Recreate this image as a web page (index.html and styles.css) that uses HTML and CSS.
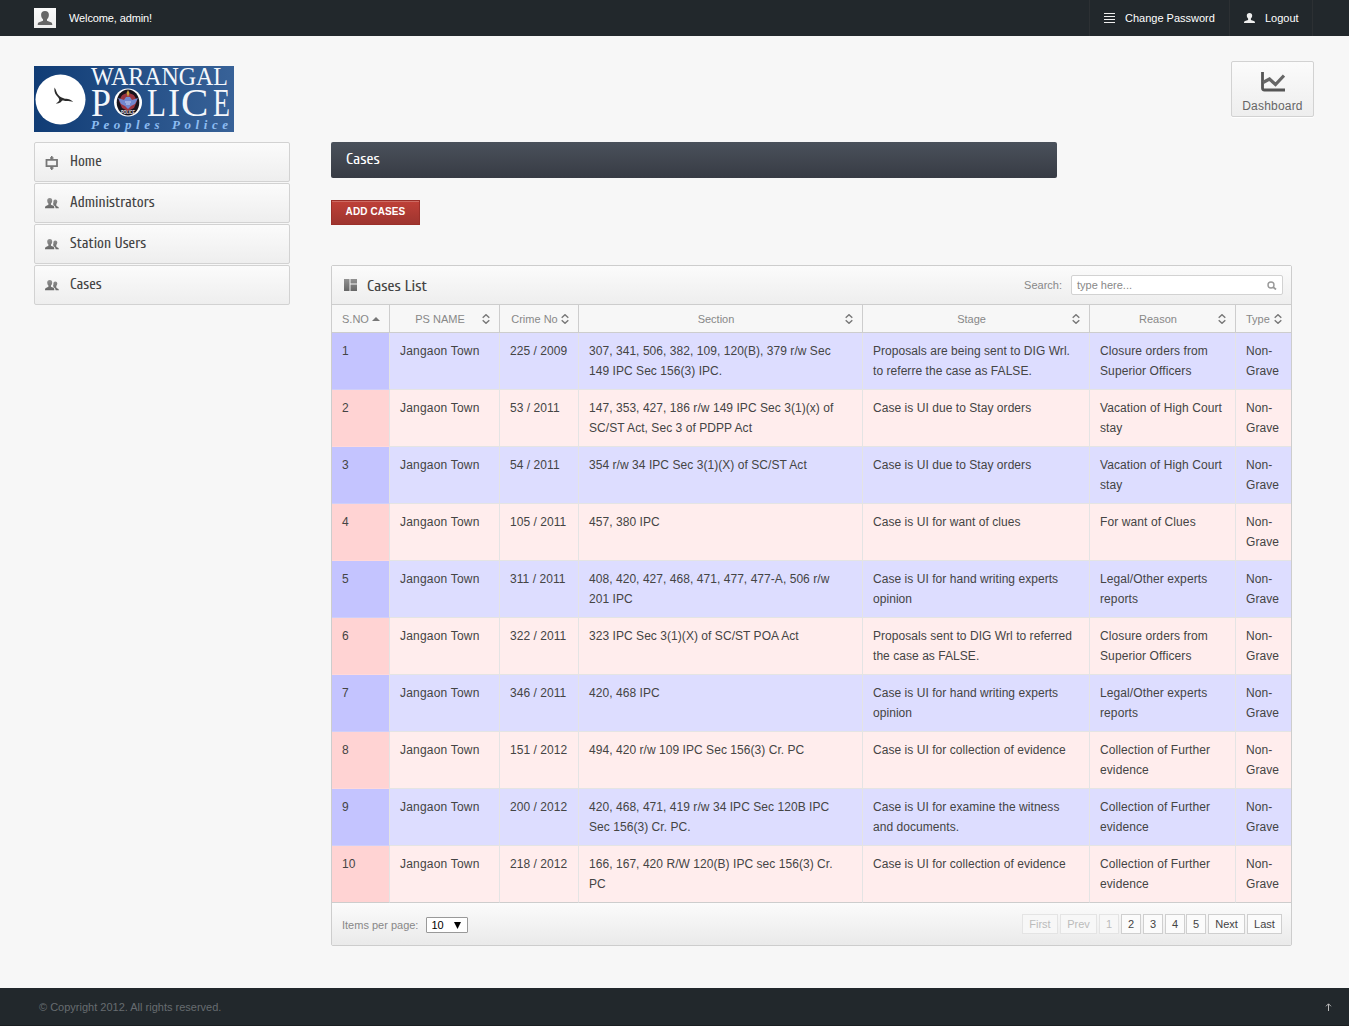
FILE: index.html
```html
<!DOCTYPE html>
<html lang="en">
<head>
<meta charset="utf-8">
<title>Cases</title>
<link rel="stylesheet" href="styles.css">
</head>
<body>
<svg class="defs" aria-hidden="true">
  <defs>
    <linearGradient id="gray" x1="0" y1="0" x2="0" y2="1"><stop offset="0" stop-color="#929292"/><stop offset="1" stop-color="#666"/></linearGradient>
    <linearGradient id="blue" x1="0" y1="0" x2="1" y2="0"><stop offset="0" stop-color="#103c75"/><stop offset="1" stop-color="#386298"/></linearGradient>
    <symbol id="users" viewBox="0 0 14 11"><path fill="url(#gray)" d="M4.8 0c1.8 0 2.5 1.2 2.4 2.8-.1 1.3-.6 2.2-1.2 2.7v1.3l2.4 1c.7.3.9.9.9 2.4H0c0-1.400.3-2 .9-2.300l2.500-1.100V5.500C2.700 5 2.300 4.100 2.200 2.800 2.100 1.200 3 0 4.800 0zM10.300 1.400c1.500 0 2.100 1.100 2 2.400-.1 1-.5 1.800-1 2.200v1.200c0 .5.400.800 1.200 1.200 1 .5 1.400.9 1.400 1.800h-3.300c-.1-1.300-.4-2-1.300-2.500l-.9-.5V6.600C8 6.100 8.100 5.200 8.400 4.400c-.2-1.700.4-3 1.900-3z"/></symbol>
    <symbol id="sort" viewBox="0 0 8 10"><path d="M.7 3.700 4 .7l3.300 3M.7 6.300 4 9.300l3.300-3" fill="none" stroke="#777" stroke-width="1.400"/></symbol>
  </defs>
</svg>

<header class="topbar">
  <div class="welcome">
    <span class="avatar"><svg width="16" height="16" viewBox="0 0 16 16"><path fill="#666" d="M8 1c2.600 0 3.900 1.600 3.900 3.800 0 1.900-.8 3.600-1.900 4.500v1.500l3.800 1.500c1 .4 1.400 1 1.500 2.700H.7c.1-1.700.5-2.300 1.500-2.700L6 10.800V9.300C4.900 8.400 4.100 6.700 4.100 4.800 4.100 2.600 5.400 1 8 1z"/></svg></span>
    <span class="hello">Welcome, admin!</span>
  </div>
  <nav class="usernav">
    <a class="change"><svg width="11" height="11" viewBox="0 0 11 11"><path d="M0 .5h11M0 3.500h11M0 6.500h11M0 9.500h11" stroke="#eee"/></svg><span>Change Password</span></a>
    <a class="logout"><svg width="11" height="11" viewBox="0 0 11 11"><path fill="#eee" d="M5.500 0c1.800 0 2.700 1.100 2.700 2.600 0 1.300-.6 2.400-1.300 3v1.300l3 1c.8.300 1.100.8 1.100 2.100H0C0 8.700.3 8.200 1.100 7.900l3-1V5.600c-.7-.6-1.300-1.700-1.300-3C2.800 1.100 3.700 0 5.500 0z"/></svg><span>Logout</span></a>
  </nav>
</header>

<div class="masthead">
  <svg class="logo" width="200" height="66" viewBox="0 0 200 66">
    <rect width="200" height="66" fill="url(#blue)"/>
    <circle cx="26.500" cy="33.500" r="25" fill="#fff"/>
    <path d="M20.500 21.500c1.200 1.500 1.500 3 2.200 4.800.8 2.200 2.300 3.800 4.400 4.900 1.800.9 3.100 1.500 5.300 1.600 2 0 4.600.900 6.900 3.300-2.400-1.100-4.300-1.100-6.700-1.200-1.800-.1-3-.4-4.100-.5-.8.200-1.100.9-1.800 1.900-1.200 1-2.900 1.200-4.900 1.300 1.600-1 3.200-2.300 3.500-3.600-.3-2.200-1.600-3-2.800-4.400-2-2.300-2.400-5-2-8.100z" fill="#2b2b2b"/>
    <text class="serif" x="57" y="18.500" font-size="25" textLength="137" lengthAdjust="spacingAndGlyphs">WARANGAL</text>
    <text class="serif" x="57" y="50" font-size="41" textLength="20" lengthAdjust="spacingAndGlyphs">P</text>
    <text class="serif" x="113" y="50" font-size="41" textLength="19" lengthAdjust="spacingAndGlyphs">L</text>
    <text class="serif" x="134" y="50" font-size="41" textLength="12" lengthAdjust="spacingAndGlyphs">I</text>
    <text class="serif" x="147" y="50" font-size="41">C</text>
    <text class="serif" x="179" y="50" font-size="41" textLength="17" lengthAdjust="spacingAndGlyphs">E</text>
    <ellipse cx="94" cy="36.500" rx="14" ry="14" fill="#fff"/>
    <ellipse cx="94" cy="36.500" rx="11.300" ry="13" fill="#18131c"/>
    <path d="M87 31c2-5 12-5 14 0l2 4-3 7-6 3-6-3-3-7z" fill="#9b3540"/>
    <path d="M84 32l6 2 2-3h4l2 3 6-2-3 6-4 2-3 3-3-3-4-2z" fill="#7187cf"/>
    <path d="M94 24l1.500 3L94 31l-1.500-4z" fill="#d0a13c"/>
    <path d="M91 36h6M92 38h4" stroke="#c9d3f2"/>
    <text x="87" y="48" font-size="5" font-weight="bold" fill="#e7e3e9" textLength="14" lengthAdjust="spacingAndGlyphs">POLICE</text>
    <text class="tag" x="57" y="63" font-size="13" textLength="137" lengthAdjust="spacing">Peoples Police</text>
  </svg>
  <a class="dashboard"><svg width="24" height="20" viewBox="0 0 24 20"><path d="M1.500 0v16q0 2 2 2H24" fill="none" stroke="#555" stroke-width="2.800"/><path d="M2 10.500l6.500-3.500 6 5.500L23 3.500" fill="none" stroke="#666" stroke-width="3.200"/></svg><span>Dashboard</span></a>
</div>

<div class="layout">
  <nav class="side">
    <a><svg width="14" height="14" viewBox="0 0 14 14"><path d="M1.500 3.800h10.500v6.400H1.500z" fill="none" stroke="#777" stroke-width="1.800"/><path d="M6.750 0v3.500M5 2h3.500M6.750 10.500V14M5 12h3.500" stroke="#777" stroke-width="1.500"/></svg><span class="cond">Home</span></a>
    <a><svg width="14" height="11"><use href="#users"/></svg><span class="cond">Administrators</span></a>
    <a><svg width="14" height="11"><use href="#users"/></svg><span class="cond">Station Users</span></a>
    <a><svg width="14" height="11"><use href="#users"/></svg><span class="cond">Cases</span></a>
  </nav>

  <main class="content">
    <h1 class="pagetitle"><span class="cond big">Cases</span></h1>
    <a class="add">ADD CASES</a>

    <section class="panel">
      <div class="panelhead">
        <svg width="13" height="12" viewBox="0 0 13 12"><path fill="url(#gray)" d="M0 0h5.500v12H0zM6.500 0H13v4.500H6.500zM6.500 5.500H13V12H6.500z"/></svg>
        <h2><span class="cond big">Cases List</span></h2>
        <label>Search:</label>
        <div class="search"><span>type here...</span><svg width="10" height="9" viewBox="0 0 10 9"><circle cx="4" cy="4" r="3" fill="none" stroke="#999" stroke-width="1.400"/><path d="M6 6l3 2.500" stroke="#999" stroke-width="1.700"/></svg></div>
      </div>
      <table>
        <colgroup><col class="c1"><col class="c2"><col class="c3"><col class="c4"><col class="c5"><col class="c6"><col class="c7"></colgroup>
        <thead><tr>
          <th><div><span>S.NO</span><svg width="8" height="4" viewBox="0 0 8 4"><path d="M0 4l4-4 4 4z" fill="#777"/></svg></div></th>
          <th><div><span>PS NAME</span><svg width="8" height="10"><use href="#sort"/></svg></div></th>
          <th><div><span>Crime No</span><svg width="8" height="10"><use href="#sort"/></svg></div></th>
          <th><div><span>Section</span><svg width="8" height="10"><use href="#sort"/></svg></div></th>
          <th><div><span>Stage</span><svg width="8" height="10"><use href="#sort"/></svg></div></th>
          <th><div><span>Reason</span><svg width="8" height="10"><use href="#sort"/></svg></div></th>
          <th><div><span>Type</span><svg width="8" height="10"><use href="#sort"/></svg></div></th>
        </tr></thead>
        <tbody>
          <tr><td>1</td><td>Jangaon Town</td><td>225 / 2009</td><td>307, 341, 506, 382, 109, 120(B), 379 r/w Sec<br>149 IPC Sec 156(3) IPC.</td><td>Proposals are being sent to DIG Wrl.<br>to referre the case as FALSE.</td><td>Closure orders from<br>Superior Officers</td><td>Non-<br>Grave</td></tr>
          <tr><td>2</td><td>Jangaon Town</td><td>53 / 2011</td><td>147, 353, 427, 186 r/w 149 IPC Sec 3(1)(x) of<br>SC/ST Act, Sec 3 of PDPP Act</td><td>Case is UI due to Stay orders</td><td>Vacation of High Court<br>stay</td><td>Non-<br>Grave</td></tr>
          <tr><td>3</td><td>Jangaon Town</td><td>54 / 2011</td><td>354 r/w 34 IPC Sec 3(1)(X) of SC/ST Act</td><td>Case is UI due to Stay orders</td><td>Vacation of High Court<br>stay</td><td>Non-<br>Grave</td></tr>
          <tr><td>4</td><td>Jangaon Town</td><td>105 / 2011</td><td>457, 380 IPC</td><td>Case is UI for want of clues</td><td>For want of Clues</td><td>Non-<br>Grave</td></tr>
          <tr><td>5</td><td>Jangaon Town</td><td>311 / 2011</td><td>408, 420, 427, 468, 471, 477, 477-A, 506 r/w<br>201 IPC</td><td>Case is UI for hand writing experts<br>opinion</td><td>Legal/Other experts<br>reports</td><td>Non-<br>Grave</td></tr>
          <tr><td>6</td><td>Jangaon Town</td><td>322 / 2011</td><td>323 IPC Sec 3(1)(X) of SC/ST POA Act</td><td>Proposals sent to DIG Wrl to referred<br>the case as FALSE.</td><td>Closure orders from<br>Superior Officers</td><td>Non-<br>Grave</td></tr>
          <tr><td>7</td><td>Jangaon Town</td><td>346 / 2011</td><td>420, 468 IPC</td><td>Case is UI for hand writing experts<br>opinion</td><td>Legal/Other experts<br>reports</td><td>Non-<br>Grave</td></tr>
          <tr><td>8</td><td>Jangaon Town</td><td>151 / 2012</td><td>494, 420 r/w 109 IPC Sec 156(3) Cr. PC</td><td>Case is UI for collection of evidence</td><td>Collection of Further<br>evidence</td><td>Non-<br>Grave</td></tr>
          <tr><td>9</td><td>Jangaon Town</td><td>200 / 2012</td><td>420, 468, 471, 419 r/w 34 IPC Sec 120B IPC<br>Sec 156(3) Cr. PC.</td><td>Case is UI for examine the witness<br>and documents.</td><td>Collection of Further<br>evidence</td><td>Non-<br>Grave</td></tr>
          <tr><td>10</td><td>Jangaon Town</td><td>218 / 2012</td><td>166, 167, 420 R/W 120(B) IPC sec 156(3) Cr.<br>PC</td><td>Case is UI for collection of evidence</td><td>Collection of Further<br>evidence</td><td>Non-<br>Grave</td></tr>
        </tbody>
      </table>
      <div class="panelfoot">
        <div class="perpage"><span>Items per page:</span><span class="select">10<svg width="7" height="7" viewBox="0 0 7 7"><path d="M0 0h7L3.500 7z"/></svg></span></div>
        <div class="pager"><a class="off first">First</a><a class="off prev">Prev</a><a class="off">1</a><a>2</a><a>3</a><a>4</a><a class="five">5</a><a class="next">Next</a><a class="last">Last</a></div>
      </div>
    </section>
  </main>
</div>

<footer class="footer"><span>© Copyright 2012. All rights reserved.</span><svg width="7" height="8" viewBox="0 0 7 8"><path d="M3.500 8V1M1 3.300L3.500.8 6 3.300" fill="none" stroke="#bbb"/></svg></footer>
</body>
</html>
```
FILE: styles.css
```css
* { box-sizing: border-box; }
body {
  margin: 0;
  height: 1026px;
  display: flex;
  flex-direction: column;
  background: #f7f7f7;
  font: 12px/20px "Liberation Sans", Arial, sans-serif;
  color: #444;
}
svg { display: block; flex: none; }
.defs { position: absolute; width: 0; height: 0; }

.topbar {
  height: 36px;
  flex: none;
  display: flex;
  justify-content: space-between;
  padding: 0 36px 0 34px;
  background: #22282c;
  color: #fff;
  font-size: 11px;
}
.welcome { display: flex; align-items: center; gap: 13px; }
.hello { letter-spacing: -.12px; }
.avatar {
  width: 22px;
  height: 20px;
  padding: 2px 3px;
  background: linear-gradient(#fafafa, #eee);
}
.usernav { display: flex; border-right: 1px solid #2c3033; }
.usernav a { display: flex; align-items: center; gap: 10px; border-left: 1px solid #2c3033; padding-left: 14px; white-space: nowrap; }
.change { width: 140px; }
.logout { width: 83px; }

.masthead { flex: none; height: 106px; padding: 25px 35px 0 34px; display: flex; justify-content: space-between; }
.logo { margin-top: 5px; }
.serif { font-family: "Liberation Serif", serif; fill: #f4f7fb; }
.tag { font-family: "Liberation Serif", serif; font-style: italic; font-weight: bold; fill: #8dbcf1; }
.dashboard {
  width: 83px;
  height: 56px;
  border: 1px solid #d2d2d2;
  border-radius: 2px;
  background: linear-gradient(#fbfbfb, #eee);
  box-shadow: 0 1px 1px #fff;
  display: flex;
  flex-direction: column;
  align-items: center;
  padding-top: 10px;
  color: #666;
  line-height: 14px;
}
.dashboard span { margin-top: 7px; letter-spacing: .2px; }

.layout { flex: 1; display: flex; padding-left: 34px; gap: 41px; }
.side { width: 256px; display: flex; flex-direction: column; gap: 1px; }
.side a {
  height: 40px;
  border: 1px solid #d2d2d2;
  border-radius: 2px;
  background: linear-gradient(#fbfbfb, #eee);
  display: flex;
  align-items: center;
  gap: 11px;
  padding-left: 10px;
}
.side svg { margin-top: 1px; }
.cond {
  font-family: Cuprum, Roboto, sans-serif;
  font-size: 15px;
}
.big { font-size: 16px; }
.content { width: 961px; display: flex; flex-direction: column; align-items: flex-start; }
.pagetitle {
  margin: 0;
  width: 726px;
  height: 36px;
  border-radius: 2px;
  background: linear-gradient(#4a515b, #373b44);
  color: #fff;
  font-weight: normal;
  line-height: 20px;
  display: flex;
  align-items: center;
  padding: 0 0 2px 15px;
}
.add {
  width: 89px;
  height: 25px;
  margin: 22px 0 40px;
  border: 1px solid #9b2f29;
  background: linear-gradient(#bf4038, #9e352f);
  box-shadow: inset 0 1px #cd6a62;
  color: #fff;
  font-size: 10px;
  font-weight: bold;
  line-height: 22px;
  text-align: center;
  letter-spacing: .1px;
}
.panel { width: 961px; height: 681px; border: 1px solid #cdcdcd; border-radius: 2px; }
.panelhead {
  height: 39px;
  border-bottom: 1px solid #cdcdcd;
  background: linear-gradient(#fbfbfb, #eee);
  display: flex;
  align-items: center;
  padding: 0 8px 0 12px;
  color: #888;
  font-size: 11px;
}
.panelhead h2 { margin: 0 auto 0 10px; font-weight: normal; color: #444; line-height: 20px; }
.search {
  width: 212px;
  height: 20px;
  margin-left: 9px;
  border: 1px solid #d2d2d2;
  border-radius: 2px;
  background: #fff;
  display: flex;
  align-items: center;
  justify-content: space-between;
  padding: 0 5px;
}
table { width: 959px; table-layout: fixed; border-collapse: separate; border-spacing: 0; }
.c1 { width: 58px; }
.c2 { width: 110px; }
.c3 { width: 79px; }
.c4 { width: 284px; }
.c5 { width: 227px; }
.c6 { width: 146px; }
.c7 { width: 55px; }
th {
  height: 28px;
  padding: 0 9px 0 10px;
  border-right: 1px solid #cdcdcd;
  border-bottom: 1px solid #cdcdcd;
  font-size: 11px;
  font-weight: normal;
  color: #888;
}
th div { display: flex; align-items: center; justify-content: space-between; line-height: 26px; white-space: nowrap; }
th span { flex: 1; text-align: center; margin-right: 2px; }
th:first-child span, th:last-child span { text-align: left; margin-right: 0; }
td {
  height: 57px;
  padding: 8px 0 8px 10px;
  vertical-align: top;
  white-space: nowrap;
  letter-spacing: .05px;
  border-right: 1px solid #e4e4e4;
  border-bottom: 1px solid #e4e4e4;
  background: #ffeded;
}
td:nth-child(2) { letter-spacing: .2px; }
td:nth-child(6) { letter-spacing: .1px; }
tr:nth-child(odd) td { background: #ddddff; }
tr td:first-child { background: #ffd3d3; border-bottom-color: #ffd9d9; }
tr:nth-child(odd) td:first-child { background: #c4c4ff; border-bottom-color: #cfcff8; }
th:last-child, td:last-child { border-right: 0; }
tbody tr:last-child td, tbody tr:last-child td:first-child { border-bottom-color: #cdcdcd; }
.panelfoot {
  height: 42px;
  background: linear-gradient(#fbfbfb, #eaeaea);
  display: flex;
  justify-content: space-between;
  padding: 0 9px 0 10px;
  font-size: 11px;
}
.perpage { display: flex; align-items: center; gap: 8px; color: #888; margin-top: 2px; }
.select {
  width: 42px;
  height: 16px;
  border: 1px solid #999;
  border-radius: 1px;
  background: #fff;
  color: #000;
  line-height: 15px;
  display: flex;
  align-items: center;
  justify-content: space-between;
  padding: 0 6px 0 4px;
}
.pager { display: flex; gap: 2px; padding-top: 11px; }
.pager a { width: 20px; height: 20px; border: 1px solid #cfcfcf; background: #fbfbfb; text-align: center; line-height: 18px; white-space: nowrap; }
.pager .off { color: #bbb; border-color: #e4e4e4; background: #f7f7f7; }
.pager .first { width: 36px; }
.pager .prev, .pager .next { width: 37px; }
.pager .last { width: 35px; }
.pager .five { margin-left: -1px; }

.footer {
  flex: none;
  height: 38px;
  background: #22282c;
  color: #676c70;
  font-size: 11px;
  display: flex;
  align-items: center;
  justify-content: space-between;
  padding: 0 17px 0 39px;
  border-bottom: 1px solid #1a1e21;
}
```
